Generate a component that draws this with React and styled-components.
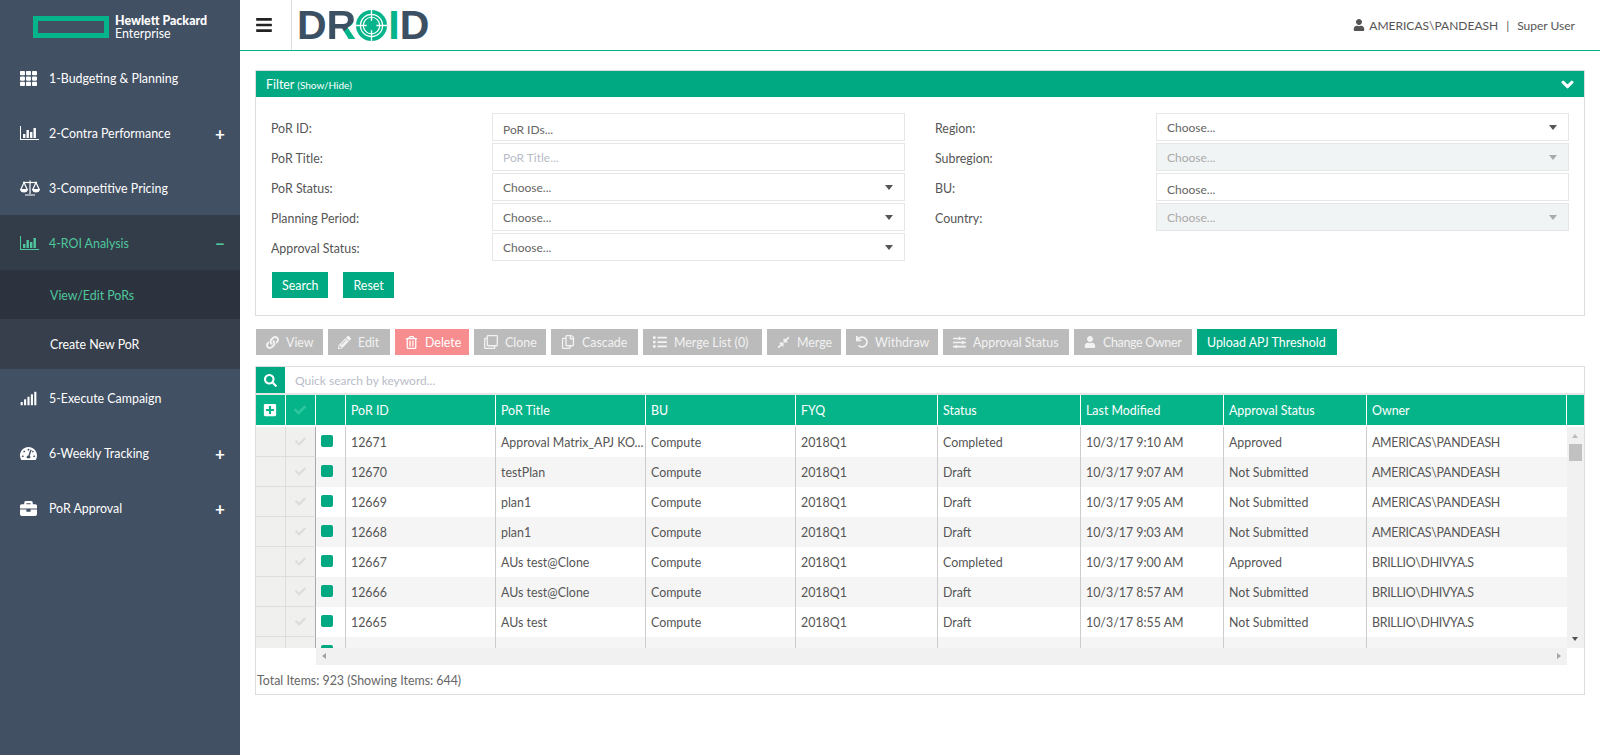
import React from "react";
import styled, { createGlobalStyle } from "styled-components";
import {
  FaBars,
  FaBriefcase,
  FaCheck,
  FaChevronDown,
  FaCompressAlt,
  FaLink,
  FaList,
  FaPencilAlt,
  FaPlusSquare,
  FaRegClone,
  FaRegCopy,
  FaRegTrashAlt,
  FaSearch,
  FaSignal,
  FaSlidersH,
  FaTachometerAlt,
  FaTh,
  FaUndo,
  FaUser,
} from "react-icons/fa";

const GREEN = "#01a982";
const HEAD_GREEN = "#06b48a";
const FONT = `Lato, "Open Sans", "Liberation Sans", sans-serif`;

const GlobalStyle = createGlobalStyle`
  html, body {
    margin: 0;
    padding: 0;
    background: #fff;
    font-family: ${FONT};
    font-size: 12.4px;
    color: #555;
  }
  * {
    box-sizing: border-box;
  }
`;

const Page = styled.div`
  display: flex;
  min-height: 755px;
  height: 755px;
  overflow: hidden;
`;

const Sidebar = styled.aside`
  width: 240px;
  flex: none;
  background: #425063;
  color: #fff;
`;

const Brand = styled.div`
  height: 50px;
  display: flex;
  align-items: flex-start;
  padding: 16px 0 0 33px;
`;

const BrandMark = styled.div`
  width: 76px;
  height: 22px;
  border: 5px solid #05b48a;
  margin-right: 6px;
`;

const BrandText = styled.div`
  font-size: 12.4px;
  line-height: 12.5px;
  margin-top: -1px;
  b {
    display: block;
    font-weight: 900;
  }
`;

const MenuItem = styled.div`
  height: 55px;
  display: flex;
  align-items: center;
  padding: ${({ $low }) => ($low ? "3px" : "1px")} 15px 0 20px;
  background: ${({ $active }) => ($active ? "#333c49" : "transparent")};
  color: ${({ $active }) => ($active ? "#4fc79d" : "#fff")};
`;

const MenuIcon = styled.span`
  width: 29px;
  flex: none;
  display: flex;
  align-items: center;
  svg {
    display: block;
  }
`;

const MenuLabel = styled.span`
  flex: 1;
`;

const MenuToggle = styled.span`
  font-size: 17px;
  font-weight: 700;
  line-height: 1;
  width: 10px;
  text-align: center;
`;

const SubItem = styled.div`
  height: ${({ $active }) => ($active ? "49px" : "50px")};
  display: flex;
  align-items: center;
  padding: 1px 0 0 50px;
  background: ${({ $active }) => ($active ? "#2c333f" : "#373f4c")};
  color: ${({ $active }) => ($active ? "#4fc79d" : "#fff")};
`;

const Main = styled.main`
  flex: 1;
  min-width: 0;
`;

const TopBar = styled.header`
  height: 51px;
  display: flex;
  align-items: stretch;
  border-bottom: 1px solid ${HEAD_GREEN};
`;

const MenuButton = styled.div`
  width: 52px;
  display: flex;
  align-items: center;
  padding-left: 15px;
  border-right: 1px solid #ddd;
  color: #222;
`;

const Logo = styled.div`
  display: flex;
  align-items: center;
  height: 50px;
  padding-left: 5px;
  font-family: "Liberation Sans", Arial, sans-serif;
  font-weight: 700;
  font-size: 41px;
  line-height: 1;
`;

const LogoLetter = styled.span`
  color: ${({ $green }) => ($green ? "#05b48a" : "#3c5063")};
`;

const LogoR = styled.span`
  background: linear-gradient(135deg, #3c5063 62%, #05b48a 62%);
  -webkit-background-clip: text;
  background-clip: text;
  color: transparent;
`;

const TargetSvg = styled.svg`
  width: 31px;
  height: 31px;
  margin: 0 1px 0 0;
`;

const UserBox = styled.div`
  margin-left: auto;
  display: flex;
  align-items: center;
  padding: 0 25px 0 0;
  font-size: 12px;
  color: #555;
  svg {
    margin-right: 4px;
  }
`;

const UserSep = styled.span`
  margin: 0 8px;
`;

const Content = styled.div`
  padding: 19px 15px 0;
`;

const Panel = styled.section`
  border: 1px solid #ddd;
`;

const FilterHead = styled.div`
  height: 26px;
  display: flex;
  align-items: center;
  justify-content: space-between;
  padding: 0 10px;
  background: ${GREEN};
  color: #fff;
  small {
    font-size: 10px;
  }
  svg {
    stroke: currentColor;
    stroke-width: 40px;
  }
`;

const FilterBody = styled.div`
  padding: 16px 15px 17px 15px;
`;

const FilterGrid = styled.div`
  display: grid;
  grid-template-columns: 634px 634px;
  column-gap: 30px;
`;

const FieldColumn = styled.div`
  display: flex;
  flex-direction: column;
  gap: 2px;
`;

const FieldRow = styled.div`
  display: flex;
  align-items: center;
  justify-content: space-between;
  height: 28px;
`;

const FieldLabel = styled.label`
  padding-top: 3px;
  color: #555;
`;

const FieldBox = styled.div`
  width: 413px;
  height: 28px;
  display: flex;
  align-items: center;
  justify-content: space-between;
  padding: ${({ $low }) => ($low ? "4px" : "0")} 10px 0;
  border: 1px solid #e6e6e6;
  background: ${({ $disabled }) => ($disabled ? "#f1f4f4" : "#fff")};
  color: ${({ $disabled, $faint }) => ($faint ? "#b8bcc8" : $disabled ? "#aaa" : "#666")};
  font-size: 12px;
`;

const Caret = styled.span`
  width: 0;
  height: 0;
  border-left: 4.5px solid transparent;
  border-right: 4.5px solid transparent;
  border-top: 5px solid ${({ $disabled }) => ($disabled ? "#aaa" : "#555")};
  margin-right: 1px;
`;

const FilterActions = styled.div`
  display: flex;
  gap: 15px;
  margin: 11px 0 0 1px;
`;

const Button = styled.button`
  flex: none;
  width: ${({ $width }) => ($width ? `${$width}px` : "auto")};
  height: 26px;
  display: inline-flex;
  align-items: center;
  gap: 7px;
  padding: 0 ${({ $width }) => ($width ? "0" : "10px")} 0 10px;
  border: 0;
  font-family: ${FONT};
  font-size: 12.4px;
  letter-spacing: ${({ $tight }) => ($tight ? "-0.3px" : "0")};
  white-space: nowrap;
  background: ${({ $kind }) =>
    $kind === "danger" ? "#f88d8f" : $kind === "primary" ? GREEN : "#bbb"};
  color: ${({ $kind }) => ($kind ? "#fff" : "#f2f2f2")};
`;

const Toolbar = styled.div`
  display: flex;
  gap: 5px;
  margin: 13px 0 11px 1px;
`;

const SearchRow = styled.div`
  height: 28px;
  display: flex;
  border-bottom: 2px solid #e6e6e6;
`;

const SearchIcon = styled.div`
  width: 29px;
  display: flex;
  align-items: center;
  justify-content: center;
  background: ${GREEN};
  color: #fff;
`;

const SearchHint = styled.div`
  padding-left: 10px;
  align-self: center;
  color: #b8bcc8;
  font-size: 12px;
`;

const COLUMNS = "30px 30px 30px 150px 150px 150px 142px 143px 143px 143px 200px";

const HeadRow = styled.div`
  display: grid;
  grid-template-columns: ${COLUMNS} 17px;
  height: 31px;
  border-bottom: 1px solid #fff;
  background: ${HEAD_GREEN};
  color: #fff;
`;

const HeadCell = styled.div`
  display: flex;
  align-items: center;
  justify-content: ${({ $center }) => ($center ? "center" : "flex-start")};
  padding-left: ${({ $center }) => ($center ? "0" : "5px")};
  padding-right: ${({ $center }) => ($center ? "1px" : "0")};
  color: ${({ $muted }) => ($muted ? "#2fc7a0" : "#fff")};
  border-right: 1px solid #fff;
  &:last-child {
    border-right: 0;
  }
`;

const TableArea = styled.div`
  display: flex;
  height: 222px;
  padding-top: 1px;
`;

const Rows = styled.div`
  width: 1311px;
  overflow: hidden;
`;

const Row = styled.div`
  display: grid;
  grid-template-columns: ${COLUMNS};
  height: 30px;
  background: ${({ $alt }) => ($alt ? "#f5f5f5" : "#fff")};
`;

const Cell = styled.div`
  display: flex;
  align-items: center;
  padding: 1px 0 0 5px;
  border-right: 1px solid #ccc;
  color: #555;
  white-space: nowrap;
  overflow: hidden;
  &:last-child {
    border-right: 0;
    letter-spacing: -0.3px;
  }
`;

const GutterCell = styled.div`
  display: flex;
  align-items: center;
  justify-content: center;
  background: #f0f0ee;
  border-right: 1px solid ${({ $dark }) => ($dark ? "#aaa" : "#ddd")};
  border-bottom: 1px solid #ddd;
  color: #dcdcdc;
`;

const StatusCell = styled(Cell)`
  padding: 0 0 0 5px;
  background: inherit;
`;

const StatusDot = styled.span`
  width: 12px;
  height: 12px;
  margin-top: -3px;
  border-radius: 2px;
  background: ${GREEN};
`;

const VScroll = styled.div`
  position: relative;
  width: 17px;
  height: 221px;
  background: #f1f1f1;
`;

const Thumb = styled.div`
  position: absolute;
  top: 17px;
  left: 2px;
  width: 13px;
  height: 17px;
  background: #c1c1c1;
`;

const Arrow = styled.span`
  position: absolute;
  width: 0;
  height: 0;
  ${({ $dir }) =>
    $dir === "up"
      ? "top: 7px; left: 5px; border-left: 3.5px solid transparent; border-right: 3.5px solid transparent; border-bottom: 4px solid #bbb;"
      : $dir === "down"
      ? "bottom: 7px; left: 5px; border-left: 3.5px solid transparent; border-right: 3.5px solid transparent; border-top: 4px solid #505050;"
      : $dir === "left"
      ? "top: 5px; left: 6px; border-top: 3.5px solid transparent; border-bottom: 3.5px solid transparent; border-right: 4px solid #a3a3a3;"
      : "top: 5px; right: 6px; border-top: 3.5px solid transparent; border-bottom: 3.5px solid transparent; border-left: 4px solid #a3a3a3;"}
`;

const HScroll = styled.div`
  position: relative;
  width: 1251px;
  height: 17px;
  margin-left: 60px;
  background: #f1f1f1;
`;

const GridFooter = styled.div`
  height: 29px;
  display: flex;
  align-items: center;
  padding: 2px 0 0 1px;
  color: #666;
`;

// L shaped axis with four bars, used by the 2- and 4- menu entries
const BarChartIcon = () => (
  <svg width="19" height="14" viewBox="0 0 19 14" fill="currentColor">
    <rect x="0" y="0" width="1" height="14" />
    <rect x="0" y="13" width="19" height="1" />
    <rect x="3" y="8" width="2.4" height="4" />
    <rect x="6.5" y="4" width="2.4" height="8" />
    <rect x="10" y="6" width="2.4" height="6" />
    <rect x="13.5" y="2" width="2.4" height="10" />
  </svg>
);

const ScaleIcon = () => (
  <svg width="20" height="16" viewBox="0 0 20 16" fill="none" stroke="currentColor" strokeWidth="1.2">
    <path d="M10 0.5V14M5 15H15" />
    <path d="M3 2.5H17" />
    <path d="M4 2.5L0.8 9.5H7.2ZM16 2.5L12.8 9.5H19.2Z" />
    <path d="M0.8 10C1.5 12.5 6.5 12.5 7.2 10ZM12.8 10C13.5 12.5 18.5 12.5 19.2 10Z" fill="currentColor" />
  </svg>
);

const TargetIcon = () => (
  <TargetSvg viewBox="0 0 32 32">
    <circle cx="16" cy="16" r="16" fill="#05b48a" />
    <circle cx="16" cy="16" r="11.5" fill="none" stroke="#fff" strokeWidth="1.2" />
    <circle cx="16" cy="16" r="8.5" fill="none" stroke="#fff" strokeWidth="1.2" />
    <circle cx="16" cy="16" r="5" fill="#05b48a" />
    <path d="M16 0V11M16 21V32M0 16H11M21 16H32" stroke="#fff" strokeWidth="1.4" />
  </TargetSvg>
);

const MENU_TOP = [
  { label: "1-Budgeting & Planning", icon: <FaTh size={17} /> },
  { label: "2-Contra Performance", icon: <BarChartIcon />, toggle: "+" },
  { label: "3-Competitive Pricing", icon: <ScaleIcon /> },
  { label: "4-ROI Analysis", icon: <BarChartIcon />, toggle: "−", active: true },
];

const MENU_BOTTOM = [
  { label: "5-Execute Campaign", icon: <FaSignal size={17} /> },
  { label: "6-Weekly Tracking", icon: <FaTachometerAlt size={17} />, toggle: "+" },
  { label: "PoR Approval", icon: <FaBriefcase size={17} />, toggle: "+" },
];

const LEFT_FIELDS = [
  { label: "PoR ID:", value: "PoR IDs...", low: true },
  { label: "PoR Title:", value: "PoR Title...", faint: true },
  { label: "PoR Status:", value: "Choose...", caret: true },
  { label: "Planning Period:", value: "Choose...", caret: true },
  { label: "Approval Status:", value: "Choose...", caret: true },
];

const RIGHT_FIELDS = [
  { label: "Region:", value: "Choose...", caret: true },
  { label: "Subregion:", value: "Choose...", caret: true, disabled: true },
  { label: "BU:", value: "Choose...", low: true },
  { label: "Country:", value: "Choose...", caret: true, disabled: true },
];

const ACTIONS = [
  { label: "View", width: 67, icon: <FaLink size={13} /> },
  { label: "Edit", width: 62, icon: <FaPencilAlt size={13} /> },
  { label: "Delete", width: 74, icon: <FaRegTrashAlt size={13} />, kind: "danger" },
  { label: "Clone", width: 72, icon: <FaRegClone size={14} /> },
  { label: "Cascade", width: 87, icon: <FaRegCopy size={14} /> },
  { label: "Merge List (0)", width: 119, icon: <FaList size={14} /> },
  { label: "Merge", width: 74, icon: <FaCompressAlt size={13} /> },
  { label: "Withdraw", width: 92, icon: <FaUndo size={12} /> },
  { label: "Approval Status", width: 126, icon: <FaSlidersH size={13} /> },
  { label: "Change Owner", width: 118, tight: true, icon: <FaUser size={12} /> },
  { label: "Upload APJ Threshold", width: 140, kind: "primary" },
];

const HEADERS = ["PoR ID", "PoR Title", "BU", "FYQ", "Status", "Last Modified", "Approval Status", "Owner"];

const ROWS = [
  ["12671", "Approval Matrix_APJ KO...", "Compute", "2018Q1", "Completed", "10/3/17 9:10 AM", "Approved", "AMERICAS\\PANDEASH"],
  ["12670", "testPlan", "Compute", "2018Q1", "Draft", "10/3/17 9:07 AM", "Not Submitted", "AMERICAS\\PANDEASH"],
  ["12669", "plan1", "Compute", "2018Q1", "Draft", "10/3/17 9:05 AM", "Not Submitted", "AMERICAS\\PANDEASH"],
  ["12668", "plan1", "Compute", "2018Q1", "Draft", "10/3/17 9:03 AM", "Not Submitted", "AMERICAS\\PANDEASH"],
  ["12667", "AUs test@Clone", "Compute", "2018Q1", "Completed", "10/3/17 9:00 AM", "Approved", "BRILLIO\\DHIVYA.S"],
  ["12666", "AUs test@Clone", "Compute", "2018Q1", "Draft", "10/3/17 8:57 AM", "Not Submitted", "BRILLIO\\DHIVYA.S"],
  ["12665", "AUs test", "Compute", "2018Q1", "Draft", "10/3/17 8:55 AM", "Not Submitted", "BRILLIO\\DHIVYA.S"],
  ["12664", "", "", "", "", "", "", ""],
];

function Menu({ items, low }) {
  return items.map((item) => (
    <MenuItem key={item.label} $active={item.active} $low={low}>
      <MenuIcon>{item.icon}</MenuIcon>
      <MenuLabel>{item.label}</MenuLabel>
      {item.toggle && <MenuToggle>{item.toggle}</MenuToggle>}
    </MenuItem>
  ));
}

function Fields({ fields }) {
  return (
    <FieldColumn>
      {fields.map((field) => (
        <FieldRow key={field.label}>
          <FieldLabel>{field.label}</FieldLabel>
          <FieldBox $disabled={field.disabled} $faint={field.faint} $low={field.low}>
            {field.value}
            {field.caret && <Caret $disabled={field.disabled} />}
          </FieldBox>
        </FieldRow>
      ))}
    </FieldColumn>
  );
}

export default function App() {
  return (
    <>
      <GlobalStyle />
      <Page>
        <Sidebar>
          <Brand>
            <BrandMark />
            <BrandText>
              <b>Hewlett Packard</b>
              Enterprise
            </BrandText>
          </Brand>
          <Menu items={MENU_TOP} />
          <SubItem $active>View/Edit PoRs</SubItem>
          <SubItem>Create New PoR</SubItem>
          <Menu items={MENU_BOTTOM} low />
        </Sidebar>

        <Main>
          <TopBar>
            <MenuButton>
              <FaBars size={18} />
            </MenuButton>
            <Logo>
              <LogoLetter>D</LogoLetter>
              <LogoR>R</LogoR>
              <TargetIcon />
              <LogoLetter $green>I</LogoLetter>
              <LogoLetter>D</LogoLetter>
            </Logo>
            <UserBox>
              <FaUser size={12} />
              AMERICAS\PANDEASH
              <UserSep>|</UserSep>
              Super User
            </UserBox>
          </TopBar>

          <Content>
            <Panel>
              <FilterHead>
                <span>
                  Filter <small>(Show/Hide)</small>
                </span>
                <FaChevronDown size={13} />
              </FilterHead>
              <FilterBody>
                <FilterGrid>
                  <Fields fields={LEFT_FIELDS} />
                  <Fields fields={RIGHT_FIELDS} />
                </FilterGrid>
                <FilterActions>
                  <Button $kind="primary">Search</Button>
                  <Button $kind="primary">Reset</Button>
                </FilterActions>
              </FilterBody>
            </Panel>

            <Toolbar>
              {ACTIONS.map((action) => (
                <Button key={action.label} $kind={action.kind} $width={action.width} $tight={action.tight}>
                  {action.icon}
                  {action.label}
                </Button>
              ))}
            </Toolbar>

            <Panel>
              <SearchRow>
                <SearchIcon>
                  <FaSearch size={13} />
                </SearchIcon>
                <SearchHint>Quick search by keyword...</SearchHint>
              </SearchRow>
              <HeadRow>
                <HeadCell $center>
                  <FaPlusSquare size={14} />
                </HeadCell>
                <HeadCell $center $muted>
                  <FaCheck size={12} />
                </HeadCell>
                <HeadCell />
                {HEADERS.map((title) => (
                  <HeadCell key={title}>{title}</HeadCell>
                ))}
                <HeadCell />
              </HeadRow>
              <TableArea>
                <Rows>
                  {ROWS.map((row, i) => (
                    <Row key={row[0]} $alt={i % 2 === 1}>
                      <GutterCell />
                      <GutterCell $dark>
                        <FaCheck size={11} />
                      </GutterCell>
                      <StatusCell>
                        <StatusDot />
                      </StatusCell>
                      {row.map((value, j) => (
                        <Cell key={j}>{j === 0 && i === 7 ? "" : value}</Cell>
                      ))}
                    </Row>
                  ))}
                </Rows>
                <VScroll>
                  <Arrow $dir="up" />
                  <Thumb />
                  <Arrow $dir="down" />
                </VScroll>
              </TableArea>
              <HScroll>
                <Arrow $dir="left" />
                <Arrow $dir="right" />
              </HScroll>
              <GridFooter>Total Items: 923 (Showing Items: 644)</GridFooter>
            </Panel>
          </Content>
        </Main>
      </Page>
    </>
  );
}
